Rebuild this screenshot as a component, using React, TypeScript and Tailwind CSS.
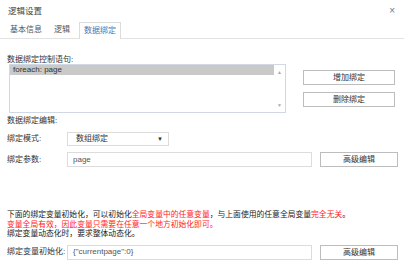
import React from 'react';

const font = { fontFamily: '"Liberation Sans", "Noto Sans CJK SC", sans-serif' };

const Btn: React.FC<{ label: string; className?: string }> = ({ label, className = '' }) => (
  <button className={`h-[15px] border border-[#bdbdbd] bg-white text-[8px] leading-[13px] text-[#333] ${className}`}>{label}</button>
);

const LogicSettings: React.FC = () => {
  return (
    <div className="w-[404px] h-[263px] bg-white text-[#333] text-[8px] leading-[10px] overflow-hidden" style={font}>
      {/* header */}
      <div className="h-[22px] flex items-center justify-between pl-[8px] pr-[9px]">
        <span className="text-[8.5px] text-[#444]">逻辑设置</span>
        <span className="text-[10px] text-[#777]">×</span>
      </div>

      {/* tabs */}
      <div className="h-[17px] flex items-end border-b border-[#e2e2e2] pl-[10px]">
        <div className="h-[16px] flex items-center text-[#555]">基本信息</div>
        <div className="h-[16px] flex items-center ml-[12px] text-[#555]">逻辑</div>
        <div className="h-[17px] flex items-center ml-[9px] px-[4px] border border-b-0 border-[#dcdcdc] bg-white -mb-px text-[#4a78b0]">数据绑定</div>
      </div>

      <div className="pl-[7px]">
        <div className="mt-[16px] h-[9px]">数据绑定控制语句:</div>

        <div className="flex">
          <div className="ml-[2px] w-[277px] h-[49px] border border-[#cfd8e3] flex">
            <div className="flex-1">
              <div className="h-[10px] bg-[#c9c9c9] pl-[3px] leading-[10px]">foreach: page</div>
            </div>
            <div className="w-[11px] flex flex-col justify-between items-center text-[5px] text-[#aaa] py-[2px]">
              <span>▲</span>
              <span>▼</span>
            </div>
          </div>
          <div className="ml-[17px] mt-[6px] flex flex-col gap-[7px]">
            <Btn label="增加绑定" className="w-[92px]" />
            <Btn label="删除绑定" className="w-[92px]" />
          </div>
        </div>

        <div className="mt-[3px] h-[10px]">数据绑定编辑:</div>

        <div className="mt-[6px] flex items-center">
          <span className="w-[60px]">绑定模式:</span>
          <div className="w-[102px] h-[14px] border border-[#dcdcdc] flex items-center justify-between pl-[8px] pr-[5px]">
            <span>数组绑定</span>
            <span className="text-[6px]">▼</span>
          </div>
        </div>

        <div className="mt-[6px] flex items-center">
          <span className="w-[60px]">绑定参数:</span>
          <div className="w-[245px] h-[15px] border border-[#dcdcdc] flex items-center pl-[5px] text-[#555]">page</div>
          <Btn label="高级编辑" className="ml-[8px] w-[78px]" />
        </div>

        <div className="mt-[43px] text-[7.8px] leading-[9.5px] text-[#222]">
          <div>
            下面的绑定变量初始化，可以初始化<span className="text-[#f22]">全局变量中的任意变量</span>，与上面使用的任意全局变量<span className="text-[#f22]">完全无关</span>。
          </div>
          <div className="text-[#f22]">变量全局有效，因此变量只需要在任意一个地方初始化即可。</div>
          <div>绑定变量动态化时，要求整体动态化。</div>
        </div>

        <div className="mt-[6px] flex items-center">
          <span className="w-[60px]">绑定变量初始化:</span>
          <div className="w-[245px] h-[15px] border border-[#dcdcdc] flex items-center pl-[5px] text-[#555]">{'{"currentpage":0}'}</div>
          <Btn label="高级编辑" className="ml-[8px] w-[78px]" />
        </div>
      </div>
    </div>
  );
};

export default function App() {
  return <LogicSettings />;
}
